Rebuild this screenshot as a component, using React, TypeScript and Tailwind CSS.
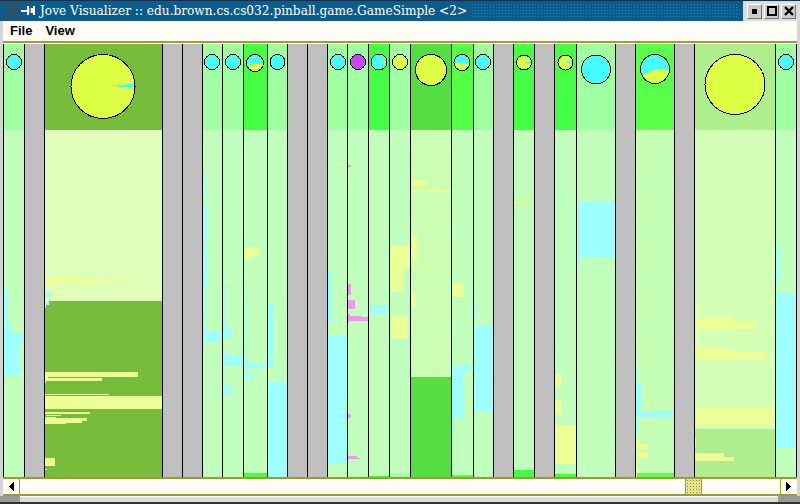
const YELLOW = "#ebff96";
const CYAN = "#9effff";
const PINK = "#ee99ee";
const BRIGHT = "#44ff44";
const BODY = "#c0ffbc";

type Box = [number, number, number, number, string];
type Ball = {
  cx: number;
  cy: number;
  r: number;
  fill: string;
  part?: { points: string; fill: string };
};
type Lane = {
  from: number;
  to: number;
  head: string;
  body: string;
  dots?: string;
  ball?: Ball;
  boxes?: Box[];
};

// all coordinates are in screenshot pixels, each lane's svg viewBox maps them back
const lanes: Lane[] = [
  {
    from: 4, to: 25, head: "#a0ffa0", body: BODY,
    ball: { cx: 14, cy: 62, r: 7.5, fill: "#44ffff" },
    boxes: [
      [4, 290, 8, 323, CYAN], [4, 323, 11, 333, CYAN], [4, 333, 24, 344, CYAN], [4, 344, 20, 375, CYAN],
    ],
  },
  { from: 25, to: 45, head: "#c0c0c0", body: "#c0c0c0" },
  {
    from: 45, to: 163, head: "#78bc3c", body: "#deffb8",
    ball: {
      cx: 103, cy: 86.5, r: 32, fill: "#ddff44",
      part: { points: "109,86 136,83.5 136,87.5", fill: "#44ffff" },
    },
    boxes: [
      [45, 301, 162, 477, "#78bc3c"],
      [45, 278, 87, 281, YELLOW], [45, 280, 135, 282, YELLOW], [45, 282, 102, 283, YELLOW], [45, 282, 52, 287, YELLOW],
      [45, 292, 50, 297, CYAN], [45, 301, 49, 305, CYAN], [45, 305, 46, 308, CYAN],
      [45, 372, 138, 377, YELLOW], [45, 377, 48, 378, YELLOW], [45, 378, 102, 381, YELLOW], [45, 381, 46, 383, YELLOW],
      [45, 394, 109, 395, YELLOW], [45, 396, 162, 409, YELLOW],
      [45, 412, 90, 414, YELLOW], [46, 415, 61, 416, YELLOW], [46, 417, 56, 418, YELLOW],
      [45, 418, 87, 421, YELLOW], [45, 421, 82, 423, YELLOW], [45, 423, 66, 424, YELLOW],
      [45, 458, 55, 466, YELLOW], [45, 469, 47, 470, YELLOW],
    ],
  },
  { from: 163, to: 183, head: "#c0c0c0", body: "#c0c0c0" },
  { from: 183, to: 203, head: "#c0c0c0", body: "#c0c0c0" },
  {
    from: 203, to: 223, head: "#a0ffa0", body: BODY,
    ball: { cx: 212, cy: 62, r: 7.5, fill: "#44ffff" },
    boxes: [
      [203, 172, 205, 198, CYAN], [203, 203, 207, 240, CYAN], [203, 240, 205, 245, CYAN], [203, 245, 207, 285, CYAN],
      [203, 285, 205, 331, CYAN], [203, 331, 222, 341, CYAN],
    ],
  },
  {
    from: 223, to: 244, head: "#a0ffa0", body: BODY,
    ball: { cx: 233, cy: 62, r: 7.5, fill: "#44ffff" },
    boxes: [
      [223, 284, 226, 323, CYAN], [223, 323, 226, 328, CYAN], [223, 328, 231, 337, CYAN],
      [223, 352, 227, 356, CYAN], [223, 356, 243, 366, CYAN], [223, 381, 226, 386, CYAN], [223, 386, 231, 395, CYAN],
    ],
  },
  {
    from: 244, to: 268, head: BRIGHT, body: BODY,
    ball: {
      cx: 255, cy: 63, r: 8.5, fill: "#44ffff",
      part: { points: "245,65 265,63.5 265,74 245,74", fill: "#ddff44" },
    },
    boxes: [
      [244, 247, 260, 255, YELLOW], [244, 255, 255, 258, YELLOW], [244, 258, 252, 259, YELLOW],
      [244, 295, 245, 362, CYAN], [244, 362, 248, 379, CYAN], [248, 364, 267, 368, CYAN], [244, 376, 254, 380, CYAN],
      [244, 473, 267, 477, BRIGHT],
    ],
  },
  {
    from: 268, to: 288, head: "#a0ffa0", body: BODY,
    ball: { cx: 277.5, cy: 62, r: 7.5, fill: "#44ffff" },
    boxes: [
      [268, 304, 274, 367, CYAN], [268, 367, 270, 377, YELLOW], [268, 382, 287, 477, CYAN],
    ],
  },
  { from: 288, to: 308, head: "#c0c0c0", body: "#c0c0c0" },
  { from: 308, to: 328, head: "#c0c0c0", body: "#c0c0c0" },
  {
    from: 328, to: 348, head: "#a0ffa0", body: BODY,
    ball: { cx: 338, cy: 62, r: 7.5, fill: "#44ffff" },
    boxes: [
      [328, 271, 332, 323, CYAN], [328, 336, 347, 464, CYAN],
    ],
  },
  {
    from: 348, to: 369, head: "#a0ffa0", body: BODY,
    ball: { cx: 358, cy: 62, r: 7.5, fill: "#cc44ff" },
    boxes: [
      [348, 165, 351, 167, PINK], [348, 284, 351, 295, PINK], [348, 300, 355, 309, PINK],
      [348, 314, 350, 316, PINK], [348, 316, 361, 321, PINK], [361, 317, 368, 321, PINK], [348, 321, 349, 323, PINK],
      [348, 414, 351, 418, PINK], [348, 456, 357, 459, PINK], [357, 458, 360, 459, PINK],
      [348, 476, 368, 477, "#a0ffa0"],
    ],
  },
  {
    from: 369, to: 390, head: BRIGHT, body: BODY,
    ball: {
      cx: 379, cy: 62, r: 8, fill: "#44ffff",
      part: { points: "380,62 388,62 388,64", fill: "#ddff44" },
    },
    boxes: [
      [369, 305, 389, 313, CYAN], [369, 476, 389, 477, BRIGHT],
    ],
  },
  {
    from: 390, to: 411, head: "#a0ffa0", body: BODY,
    ball: { cx: 400, cy: 62, r: 7.5, fill: "#ddff44" },
    boxes: [
      [390, 246, 410, 269, YELLOW], [390, 269, 403, 292, YELLOW], [391, 315, 408, 338, YELLOW],
      [390, 474, 410, 477, "#a0ffa0"],
    ],
  },
  {
    from: 411, to: 452, head: "#55dd44", body: "#c8ffb4", dots: "#dcff9c",
    ball: { cx: 431, cy: 70, r: 15.5, fill: "#ddff44" },
    boxes: [
      [411, 180, 426, 186, YELLOW], [411, 183, 427, 185, YELLOW], [411, 190, 451, 192, YELLOW],
      [411, 228, 412, 233, YELLOW], [411, 234, 417, 261, YELLOW], [411, 284, 412, 286, YELLOW], [411, 291, 416, 308, YELLOW],
      [411, 377, 451, 477, "#55dd44"],
    ],
  },
  {
    from: 452, to: 474, head: "#55ff44", body: BODY,
    ball: {
      cx: 462, cy: 62.5, r: 8, fill: "#ddff44",
      part: { points: "453,53 472,53 472,63 453,63", fill: "#44ffff" },
    },
    boxes: [
      [452, 284, 464, 296, YELLOW], [452, 296, 463, 297, YELLOW],
      [452, 366, 473, 372, CYAN], [452, 372, 463, 418, CYAN], [452, 418, 454, 431, CYAN],
      [452, 475, 473, 477, "#55ff44"],
    ],
  },
  {
    from: 474, to: 494, head: "#a0ffa0", body: BODY,
    ball: { cx: 483, cy: 62, r: 7.5, fill: "#44ffff" },
    boxes: [
      [474, 302, 475, 320, CYAN], [474, 326, 493, 411, CYAN],
    ],
  },
  { from: 494, to: 514, head: "#c0c0c0", body: "#c0c0c0" },
  {
    from: 514, to: 535, head: BRIGHT, body: BODY,
    ball: {
      cx: 524, cy: 62.5, r: 7.5, fill: "#ddff44",
      part: { points: "525,62.5 533,60.5 533,63", fill: "#44ffff" },
    },
    boxes: [
      [514, 201, 533, 203, "#ebff70"], [514, 470, 534, 477, BRIGHT],
    ],
  },
  { from: 535, to: 555, head: "#c0c0c0", body: "#c0c0c0" },
  {
    from: 555, to: 577, head: BRIGHT, body: BODY,
    ball: {
      cx: 565.5, cy: 62.5, r: 7.5, fill: "#ddff44",
      part: { points: "566,62.5 574,60.5 574,63", fill: "#44ffff" },
    },
    boxes: [
      [555, 348, 556, 374, CYAN], [555, 374, 561, 387, YELLOW], [555, 400, 561, 413, YELLOW],
      [555, 425, 576, 464, YELLOW], [555, 474, 576, 477, BRIGHT],
    ],
  },
  {
    from: 577, to: 616, head: "#a0ffa0", body: BODY,
    ball: { cx: 596, cy: 69.5, r: 14.5, fill: "#44ffff" },
    boxes: [
      [577, 196, 578, 202, CYAN], [577, 202, 615, 257, CYAN], [577, 257, 580, 268, CYAN],
    ],
  },
  { from: 616, to: 636, head: "#c0c0c0", body: "#c0c0c0" },
  {
    from: 636, to: 675, head: "#5aff4a", body: "#c4ffb8", dots: "#d8ffa8",
    ball: {
      cx: 655, cy: 69, r: 14.5, fill: "#44ffff",
      part: { points: "640,76 656,69 671,69 671,86 640,86", fill: "#ddff44" },
    },
    boxes: [
      [636, 130, 674, 131, "#d4ffb0"],
      [636, 365, 637, 384, CYAN], [636, 384, 641, 410, CYAN], [636, 410, 638, 434, CYAN], [638, 411, 674, 417, CYAN],
      [636, 439, 639, 444, YELLOW], [636, 444, 647, 449, YELLOW], [636, 452, 647, 457, YELLOW],
      [636, 459, 638, 464, YELLOW], [636, 467, 639, 472, YELLOW], [637, 473, 674, 477, "#5aff4a"],
    ],
  },
  { from: 675, to: 695, head: "#c0c0c0", body: "#c0c0c0" },
  {
    from: 695, to: 776, head: "#aeee8c", body: "#d4ffb4", dots: "#c4ffb4",
    ball: { cx: 735, cy: 84.5, r: 30, fill: "#ddff44" },
    boxes: [
      [695, 303, 697, 317, YELLOW], [695, 317, 731, 321, YELLOW], [695, 321, 755, 329, YELLOW], [695, 329, 697, 345, YELLOW],
      [695, 347, 731, 351, YELLOW], [695, 351, 765, 360, YELLOW], [695, 365, 696, 372, YELLOW],
      [695, 407, 775, 426, YELLOW], [695, 429, 775, 477, "#aeee8c"],
      [695, 438, 696, 446, YELLOW], [695, 453, 724, 461, YELLOW], [724, 457, 734, 461, YELLOW],
    ],
  },
  {
    from: 776, to: 797, head: "#a0ffa0", body: BODY,
    ball: { cx: 786, cy: 62, r: 7.5, fill: "#44ffff" },
    boxes: [
      [776, 246, 779, 284, CYAN], [776, 294, 797, 448, CYAN],
    ],
  },
];

function LaneView({ lane, index }: { lane: Lane; index: number }) {
  const w = lane.to - lane.from - 1;
  const { ball } = lane;
  return (
    <div
      className="flex flex-col shrink-0 border-r border-black"
      style={{ width: lane.to - lane.from }}
    >
      <svg
        width={w}
        height={86}
        viewBox={`${lane.from} 44 ${w} 86`}
        className="block"
        style={{ background: lane.head }}
        shapeRendering="crispEdges"
      >
        {ball && (
          <>
            <clipPath id={`ball-${index}`}>
              <circle cx={ball.cx} cy={ball.cy} r={ball.r} />
            </clipPath>
            <circle cx={ball.cx} cy={ball.cy} r={ball.r} fill={ball.fill} />
            {ball.part && (
              <polygon points={ball.part.points} fill={ball.part.fill} clipPath={`url(#ball-${index})`} />
            )}
            <circle cx={ball.cx} cy={ball.cy} r={ball.r} fill="none" stroke="#000" strokeWidth={1} />
          </>
        )}
      </svg>
      <svg
        width={w}
        height={347}
        viewBox={`${lane.from} 130 ${w} 347`}
        className="block"
        style={{ background: lane.body }}
        shapeRendering="crispEdges"
      >
        {lane.dots && (
          <>
            <pattern id={`dots-${index}`} width="6" height="6" patternUnits="userSpaceOnUse">
              <rect width="1" height="1" fill={lane.dots} />
            </pattern>
            <rect x={lane.from} y={130} width={w} height={347} fill={`url(#dots-${index})`} />
          </>
        )}
        {lane.boxes?.map(([x1, y1, x2, y2, fill], i) => (
          <rect key={i} x={x1} y={y1} width={x2 - x1} height={y2 - y1} fill={fill} />
        ))}
      </svg>
    </div>
  );
}

function WinButton({ children }: { children: React.ReactNode }) {
  return (
    <div className="w-[15px] h-[15px] flex items-center justify-center bg-[#cccccc] border border-t-white border-l-white border-r-[#777777] border-b-[#777777]">
      {children}
    </div>
  );
}

function ScrollButton({ dir }: { dir: "left" | "right" }) {
  return (
    <div className="w-[15px] shrink-0 flex items-center justify-center bg-[#fdfdf6]">
      <svg width="5" height="9" viewBox="0 0 5 9" shapeRendering="crispEdges">
        <polygon points={dir === "left" ? "5,0 5,9 0,4.5" : "0,0 0,9 5,4.5"} fill="#000" />
      </svg>
    </div>
  );
}

export default function App() {
  return (
    <div className="w-[800px] h-[504px] overflow-hidden flex flex-col bg-[#d4d4d4] font-['Liberation_Sans',sans-serif]">
      {/* title bar */}
      <div className="h-[21px] shrink-0 flex bg-[#0b5c8c] border-t border-[#16324a]">
        <svg width="38" height="20" viewBox="0 0 38 20" className="shrink-0">
          <path d="M5 1 L20 19 M20 1 L5 19" stroke="#3f4d58" strokeWidth="3" />
          <path d="M21 10 H27" stroke="#fff" strokeWidth="2" />
          <path d="M27 5 H29 V7 H33 V5 H35 V14 H33 V12 H29 V14 H27 Z" fill="#fff" />
          <path d="M30 7 V12" stroke="#000" strokeWidth="1" />
        </svg>
        <div className="ml-[2px] mt-[2px] text-white text-[12.15px] leading-[16px] whitespace-pre font-['DejaVu_Serif',serif]">
          Jove Visualizer :: edu.brown.cs.cs032.pinball.game.GameSimple &lt;2&gt;
        </div>
        <div className="flex-1 mx-[4px] my-[2px] bg-[radial-gradient(circle,#2a86b8_1px,transparent_1px)] bg-[length:3px_3px]" />
        <div className="w-[57px] shrink-0 flex items-center gap-[2px] pl-[4px] bg-[#dcdcdc]">
          <WinButton>
            <div className="w-[5px] h-[5px] bg-black" />
          </WinButton>
          <WinButton>
            <div className="w-[10px] h-[10px] border-2 border-black" />
          </WinButton>
          <WinButton>
            <svg width="10" height="10" viewBox="0 0 10 10">
              <path d="M1 1 L9 9 M9 1 L1 9" stroke="#000" strokeWidth="2.4" />
            </svg>
          </WinButton>
        </div>
      </div>

      {/* menu bar */}
      <div className="h-[22px] shrink-0 mx-[3px] flex items-center gap-[13px] pl-[7px] bg-[#fdfdf6] border-b-2 border-[#a89a3c] text-[13px] font-bold text-black">
        <span>File</span>
        <span>View</span>
      </div>
      <div className="h-px shrink-0 mx-[3px] bg-white" />

      {/* lanes */}
      <div className="flex shrink-0 h-[433px] pl-[3px]">
        <div className="w-px shrink-0 bg-black" />
        {lanes.map((lane, i) => (
          <LaneView key={lane.from} lane={lane} index={i} />
        ))}
      </div>

      {/* scrollbar */}
      <div className="h-[19px] shrink-0 mx-[3px] px-[1px] flex bg-[#fdfdf6] border-y-2 border-[#a09a30]">
        <ScrollButton dir="left" />
        <div className="flex-1 flex justify-end border-x border-[#a09a30] pr-[78px]">
          <div className="w-[17px] bg-[#e5e58c] bg-[radial-gradient(circle,#8a8a40_0.6px,transparent_0.8px)] bg-[length:3px_3px] border-x border-[#a09a30]" />
        </div>
        <ScrollButton dir="right" />
      </div>

      {/* bottom frame */}
      <div className="flex-1 flex border-b-2 border-[#333333] bg-[#dcdcdc]">
        <div className="w-[20px] bg-[#9a9a9a]" />
        <div className="flex-1 border-t border-white" />
        <div className="w-[22px] bg-[#9a9a9a]" />
      </div>
    </div>
  );
}
